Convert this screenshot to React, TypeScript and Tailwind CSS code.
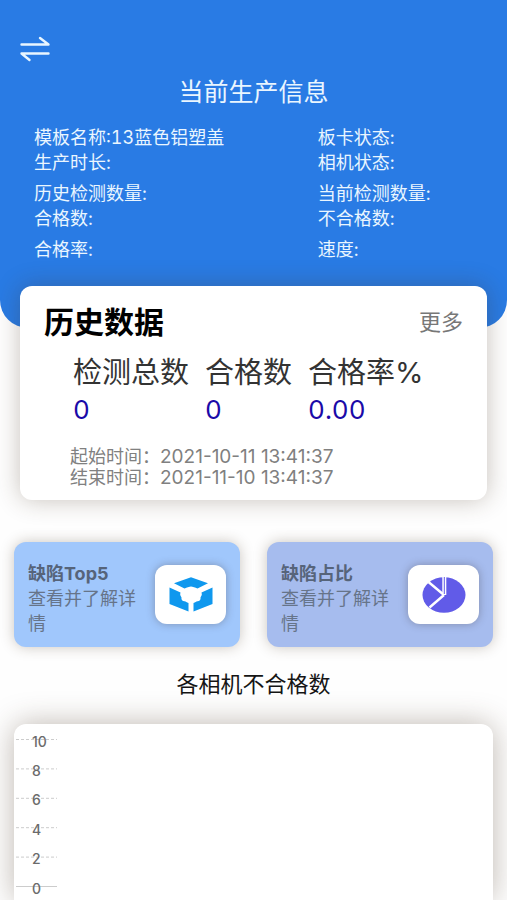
interface InfoItem {
  label: string;
  value?: string;
}

const infoGroups: [InfoItem, InfoItem][][] = [
  [
    [{ label: '模板名称', value: '13蓝色铝塑盖' }, { label: '板卡状态' }],
    [{ label: '生产时长' }, { label: '相机状态' }],
  ],
  [
    [{ label: '历史检测数量' }, { label: '当前检测数量' }],
    [{ label: '合格数' }, { label: '不合格数' }],
  ],
  [[{ label: '合格率' }, { label: '速度' }]],
];

const totals = [
  { label: '检测总数', value: '0' },
  { label: '合格数', value: '0' },
  { label: '合格率%', value: '0.00' },
];

const period = [
  { label: '起始时间', time: '2021-10-11 13:41:37' },
  { label: '结束时间', time: '2021-11-10 13:41:37' },
];

const ticks = [10, 8, 6, 4, 2, 0];

function SwapIcon() {
  return (
    <svg width="32" height="28" viewBox="0 0 32 28" fill="none" stroke="#e9f6ff" strokeWidth="2.4" strokeLinecap="round" strokeLinejoin="round">
      <path d="M2.5 9.5H29.5L21 3" />
      <path d="M29.5 18.5H2.5L10.5 25" />
    </svg>
  );
}

function CubeIcon() {
  return (
    <svg width="44" height="36" viewBox="0 0 44 36" fill="#0f98ee">
      <path d="M22 0.300L39 6.300L28.500 11.500L26 10.500C24.500 10.500 24 9.500 22 9.500S19.500 10.500 18 10.500L15.500 11.500L5 6.300Z" />
      <path d="M0.500 10.500L11.500 15.500C10.500 18 12 19 12.500 20.500C12 23 13.500 24 15.500 24.300C17 24.300 17.500 25.500 19.500 26V34.500L0.500 27Z" />
      <path d="M43.500 10.500L32.500 15.500C33.500 18 32 19 31.500 20.500C32 23 30.500 24 28.500 24.300C27 24.300 26.500 25.500 24.500 26V34.500L43.500 27Z" />
    </svg>
  );
}

function PieIcon() {
  return (
    <svg width="44" height="36" viewBox="0 0 44 36">
      <ellipse cx="22" cy="18" rx="21.500" ry="17.800" fill="#615be8" />
      <path d="M22 18L7.500 30.500M22 18L6.500 5" fill="none" stroke="#fff" strokeWidth="2.400" />
      <path d="M22.300 0V18" stroke="#fff" strokeWidth="4" />
      <path d="M22.300 0V17" stroke="#615be8" strokeWidth="1" />
    </svg>
  );
}

function FeatureCard({ title, tone, children }: { title: string; tone: string; children: React.ReactNode }) {
  return (
    <a
      href="#"
      className={`flex flex-1 items-center justify-between rounded-xl px-3.5 py-[11px] shadow-[0_0_14px_rgba(70,50,30,0.28)] ${tone}`}
    >
      <span className="block w-[112px] pt-2 text-[18px] leading-[25px] text-[#667489]">
        <strong className="block text-[18px] font-bold text-[#56647a]">{title}</strong>
        查看并了解详情
      </span>
      <span className="flex h-[59px] w-[71px] items-center justify-center rounded-xl bg-white shadow-[0_0_8px_rgba(60,50,50,0.35)]">
        {children}
      </span>
    </a>
  );
}

export default function App() {
  return (
    <div className="flex min-h-screen flex-col overflow-hidden bg-[#fefefe] font-['Inter','Noto_Sans_CJK_SC',sans-serif]">
      <header className="rounded-b-[28px] bg-[#297be4] pt-[35px] pb-[66px] text-[#eaf6ff]">
        <button type="button" aria-label="切换" className="ml-[19px] block">
          <SwapIcon />
        </button>
        <h1 className="mt-3 text-center text-[25px] leading-[34px]">当前生产信息</h1>
        <div className="mt-4 space-y-1.5 pl-[34px] text-[18px] leading-[25px] tabular-nums">
          {infoGroups.map((rows, i) => (
            <div key={i}>
              {rows.map(([left, right]) => (
                <div key={left.label} className="flex">
                  <span className="w-[60%]">
                    {left.label}:{left.value}
                  </span>
                  <span>{right.label}:</span>
                </div>
              ))}
            </div>
          ))}
        </div>
      </header>

      <section className="mx-5 -mt-[42px] rounded-xl bg-white px-6 pt-4 pb-3 shadow-[0_0_24px_rgba(70,50,30,0.3)]">
        <div className="flex items-center justify-between">
          <h2 className="text-[30px] leading-[40px] font-bold text-black">历史数据</h2>
          <a href="#" className="text-[22px] leading-8 text-[#777]">更多</a>
        </div>
        <dl className="mt-2.5 ml-[29px] flex gap-4">
          {totals.map((t) => (
            <div key={t.label}>
              <dt className="text-[29px] leading-[42px] text-[#333]">{t.label}</dt>
              <dd className="text-[26px] leading-8 text-[#1a0aa8] tabular-nums">{t.value}</dd>
            </div>
          ))}
        </dl>
        <div className="mt-5 ml-[26px] text-[18px] leading-[21px] text-[#808080]">
          {period.map((p) => (
            <p key={p.label} className="flex">
              {p.label}：<time className="text-[19px]">{p.time}</time>
            </p>
          ))}
        </div>
      </section>

      <div className="mx-3.5 mt-[42px] flex gap-[27px]">
        <FeatureCard title="缺陷Top5" tone="bg-[#a0c7fc]">
          <CubeIcon />
        </FeatureCard>
        <FeatureCard title="缺陷占比" tone="bg-[#a6bcee]">
          <PieIcon />
        </FeatureCard>
      </div>

      <h2 className="mt-5 text-center text-[22px] leading-[34px] text-[#151515]">各相机不合格数</h2>

      <section className="mx-3.5 mt-[23px] flex-1 rounded-t-xl bg-white shadow-[0_0_30px_rgba(70,50,30,0.35)]">
        <svg width="60" height="176" viewBox="0 0 60 176" className="block">
          {ticks.map((t, i) => {
            const y = 15.5 + i * 29.4;
            return (
              <g key={t}>
                <line x1="2" x2="43" y1={y} y2={y} stroke="#ccc" strokeDasharray={t ? '3 2' : undefined} />
                <text x="18" y={y + 7} fontSize="14" fontWeight="500" fill="#6b6b6b">{t}</text>
              </g>
            );
          })}
        </svg>
      </section>
    </div>
  );
}
